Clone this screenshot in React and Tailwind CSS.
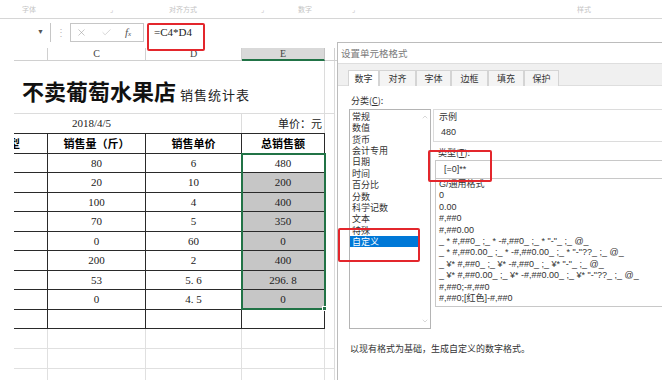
import { X, Check, ChevronUp, ChevronDown } from 'lucide-react';

const rows = [
  { c: '80', d: '6', e: '480', h: 'h-[19px]', active: true },
  { c: '20', d: '10', e: '200', h: 'h-[20px]' },
  { c: '100', d: '4', e: '400', h: 'h-[19px]' },
  { c: '70', d: '5', e: '350', h: 'h-[20px]' },
  { c: '0', d: '60', e: '0', h: 'h-[19px]' },
  { c: '200', d: '2', e: '400', h: 'h-[20px]' },
  { c: '53', d: '5. 6', e: '296. 8', h: 'h-[19px]' },
  { c: '0', d: '4. 5', e: '0', h: 'h-[20px]' },
  { c: '', d: '', e: '', h: 'h-[19px]', empty: true },
];

const categories = ['常规', '数值', '货币', '会计专用', '日期', '时间', '百分比', '分数', '科学记数', '文本', '特殊', '自定义'];

const formats = [
  'G/通用格式',
  '0',
  '0.00',
  '#,##0',
  '#,##0.00',
  '_ * #,##0_ ;_ * -#,##0_ ;_ * "-"_ ;_ @_',
  '_ * #,##0.00_ ;_ * -#,##0.00_ ;_ * "-"??_ ;_ @_',
  '_ ¥* #,##0_ ;_ ¥* -#,##0_ ;_ ¥* "-"_ ;_ @_',
  '_ ¥* #,##0.00_ ;_ ¥* -#,##0.00_ ;_ ¥* "-"??_ ;_ @_',
  '#,##0;-#,##0',
  '#,##0;[红色]-#,##0',
];

const tabs = [
  { label: '数字', w: 'w-[31px]', active: true },
  { label: '对齐', w: 'w-[37px]' },
  { label: '字体', w: 'w-[35px]' },
  { label: '边框', w: 'w-[37px]' },
  { label: '填充', w: 'w-[36px]' },
  { label: '保护', w: 'w-[35px]' },
];

function Ribbon() {
  return (
    <div className="h-[19px] border-b border-[#d6d6d6] flex items-center text-[7px] text-[#c4c4c4] [font-family:'Noto_Sans_CJK_SC',sans-serif]">
      <span className="ml-[22px]">字体</span>
      <span className="ml-[74px]">⌟</span>
      <span className="ml-[56px]">对齐方式</span>
      <span className="ml-[64px]">⌟</span>
      <span className="ml-[34px]">数字</span>
      <span className="ml-[40px]">⌟</span>
      <span className="ml-[222px]">样式</span>
    </div>
  );
}

function FormulaBar() {
  return (
    <div className="h-[29px] flex items-start pt-[4px]">
      <div className="w-[51px] h-[19px] border-r border-[#c6c6c6] flex items-center justify-end pr-[6px]">
        <span className="text-[7px] text-[#555]">▼</span>
      </div>
      <div className="w-[19px] h-[19px] flex items-center justify-center text-[10px] text-[#bbb]">⋮</div>
      <div className="w-[74px] h-[19px] border border-[#c6c6c6] flex items-center">
        <X size={11} strokeWidth={1.2} className="ml-[5px] text-[#9a9a9a]" />
        <Check size={11} strokeWidth={1.2} className="ml-[14px] text-[#b5b5b5]" />
        <span className="ml-[13px] italic text-[11px] text-[#555] [font-family:'Liberation_Serif',serif]">
          f<span className="text-[7px]">x</span>
        </span>
      </div>
      <div className="h-[19px] flex items-center pl-[10px] text-[11px] text-[#222] [font-family:'Liberation_Serif',serif]">=C4*D4</div>
    </div>
  );
}

function ColumnHeader() {
  return (
    <div className="h-[13px] flex text-[10px] text-[#444] [font-family:'Liberation_Serif',serif]">
      <div className="w-[14px]" />
      <div className="w-[34px] border-r border-b border-[#d0d0d0]" />
      <div className="w-[98px] border-r border-b border-[#d0d0d0] flex items-center justify-center leading-none">C</div>
      <div className="w-[96px] border-r border-b border-[#d0d0d0] flex items-center justify-center leading-none">D</div>
      <div className="w-[83px] bg-[#d9d9d9] border-r border-[#c4c4c4] border-b-2 border-b-[#217346] flex items-center justify-center leading-none">E</div>
      <div className="w-[10px] border-r border-b border-[#d0d0d0]" />
      <div className="flex-1 border-b border-[#d0d0d0]" />
    </div>
  );
}

function Sheet() {
  const cell = 'flex items-center justify-center border-r border-b border-[#2a2a2a]';
  return (
    <div className="flex flex-col">
      <div className="h-[53px] flex">
        <div className="w-[14px]" />
        <div className="w-[311px] border-r border-b border-[#dcdcdc] flex items-end pb-[12px] pl-[8px]">
          <span className="text-[22px] leading-none font-bold text-[#111] [font-family:'Noto_Sans_CJK_SC',sans-serif]">不卖葡萄水果店</span>
          <span className="ml-[4px] text-[13px] leading-none tracking-[1px] text-[#222] [font-family:'Noto_Sans_CJK_SC',sans-serif]">销售统计表</span>
        </div>
        <div className="w-[10px] border-r border-b border-[#dcdcdc]" />
      </div>

      <div className="h-[19px] flex text-[11px] text-[#222]">
        <div className="w-[14px]" />
        <div className="w-[228px] border-r border-[#dcdcdc] flex items-center pl-[58px] [font-family:'Liberation_Serif',serif]">2018/4/5</div>
        <div className="w-[83px] border-r border-[#dcdcdc] flex items-center justify-end pr-[2px] [font-family:'Noto_Sans_CJK_SC',sans-serif]">单价：元</div>
        <div className="w-[10px] border-r border-[#dcdcdc]" />
      </div>

      <div className="flex">
        <div className="w-[14px]" />
        <div className="relative">
          <div className="grid grid-cols-[34px_98px_96px_83px] border-t border-[#2a2a2a]">
            <div className={`${cell} h-[20px] overflow-hidden justify-start`}>
              <span className="-ml-[5px] text-[11px] font-bold [font-family:'Noto_Sans_CJK_SC',sans-serif]">型</span>
            </div>
            <div className={`${cell} h-[20px] text-[11px] font-bold [font-family:'Noto_Sans_CJK_SC',sans-serif]`}>销售量（斤）</div>
            <div className={`${cell} h-[20px] text-[11px] font-bold [font-family:'Noto_Sans_CJK_SC',sans-serif]`}>销售单价</div>
            <div className={`${cell} h-[20px] text-[11px] font-bold [font-family:'Noto_Sans_CJK_SC',sans-serif]`}>总销售额</div>
            {rows.map((r, i) => (
              <div key={i} className="contents text-[11px] text-[#222] [font-family:'Liberation_Serif',serif]">
                <div className={`${cell} ${r.h}`} />
                <div className={`${cell} ${r.h}`}>{r.c}</div>
                <div className={`${cell} ${r.h}`}>{r.d}</div>
                <div className={`${cell} ${r.h} ${r.active || r.empty ? 'bg-white' : 'bg-[#c6c6c6]'}`}>{r.e}</div>
              </div>
            ))}
          </div>
          <div className="absolute left-[227px] top-[20px] w-[85px] h-[157px] border-2 border-[#217346]" />
          <div className="absolute left-[308px] top-[173px] w-[5px] h-[5px] bg-[#217346] border border-white" />
        </div>
        <div className="w-[10px] border-r border-[#dcdcdc]" />
      </div>

      {[0, 1, 2].map((i) => (
        <div key={i} className="h-[20px] flex">
          <div className="w-[14px]" />
          <div className="w-[34px] border-r border-b border-[#e0e0e0]" />
          <div className="w-[98px] border-r border-b border-[#e0e0e0]" />
          <div className="w-[96px] border-r border-b border-[#e0e0e0]" />
          <div className="w-[83px] border-r border-b border-[#e0e0e0]" />
          <div className="w-[10px] border-r border-b border-[#e0e0e0]" />
        </div>
      ))}
    </div>
  );
}

function Dialog() {
  return (
    <div className="absolute left-[337px] top-[42px] w-[340px] h-[350px] bg-white border-l border-t border-[#bcbcbc] flex flex-col text-[#333] [font-family:'Noto_Sans_CJK_SC',sans-serif]">
      <div className="h-[20px] pl-[3px] flex items-center text-[9.5px] text-[#7a7a7a]">设置单元格格式</div>
      <div className="h-[23px] bg-[#f0f0f0] border-t border-b border-[#dedede] flex items-end pl-[10px]">
        {tabs.map((t) => (
          <div
            key={t.label}
            className={`${t.w} h-[16px] -mb-px flex items-center justify-center text-[9px] border-t border-l border-r border-[#d4d4d4] ${t.active ? 'bg-white' : 'bg-[#f4f4f4]'}`}
          >
            {t.label}
          </div>
        ))}
      </div>

      <div className="flex flex-col pl-[11px]">
        <div className="mt-[9px] h-[12px] pl-[2px] flex items-center text-[9px]">
          分类(<span className="underline">C</span>):
        </div>
        <div className="mt-[2px] flex items-start">
          <div className="w-[82px] h-[220px] border border-[#b4b4b4] flex">
            <div className="w-[69px] flex flex-col pt-[1px] text-[9px]">
              {categories.map((c) => (
                <div
                  key={c}
                  className={`h-[11.36px] leading-[11.36px] pl-[2px] ${c === '自定义' ? 'bg-[#0078d7] text-white' : ''}`}
                >
                  {c}
                </div>
              ))}
            </div>
            <div className="flex-1 flex flex-col items-center justify-between py-[3px] text-[#b0b0b0]">
              <ChevronUp size={8} strokeWidth={1.5} />
              <ChevronDown size={8} strokeWidth={1.5} />
            </div>
          </div>

          <div className="ml-[2px] w-[240px] flex flex-col">
            <div className="h-[33px] border border-[#dcdcdc] flex flex-col pl-[5px] text-[9px]">
              <div className="mt-[1px] h-[11px] leading-[11px]">示例</div>
              <div className="mt-[5px] h-[11px] leading-[11px] pl-[2px] [font-family:'Liberation_Sans',sans-serif]">480</div>
            </div>
            <div className="mt-[5px] h-[12px] pl-[5px] flex items-center text-[9px]">
              类型(<span className="underline">T</span>):
            </div>
            <div className="mt-[1px] ml-[2px] h-[19px] border border-[#c8c8c8] flex items-center pl-[8px] text-[9px] [font-family:'Liberation_Sans',sans-serif]">
              [=0]**
            </div>
            <div className="ml-[2px] h-[128px] border border-t-0 border-[#c8c8c8] flex flex-col pl-[3px] text-[9px] [font-family:'Liberation_Sans','Noto_Sans_CJK_SC',sans-serif]">
              {formats.map((f) => (
                <div key={f} className="h-[11.4px] leading-[11.4px] whitespace-pre">{f}</div>
              ))}
            </div>
          </div>
        </div>
        <div className="mt-[14px] h-[12px] pl-[1px] flex items-center text-[9px]">以现有格式为基础，生成自定义的数字格式。</div>
      </div>
    </div>
  );
}

export default function App() {
  return (
    <div className="relative w-[662px] h-[380px] overflow-hidden bg-white">
      <Ribbon />
      <FormulaBar />
      <ColumnHeader />
      <Sheet />
      <div className="absolute left-[334px] top-[61px] w-px h-[319px] bg-[#dcdcdc]" />
      <Dialog />
      <div className="absolute left-[147px] top-[23px] w-[58px] h-[28px] border-2 border-[#e3262c] rounded-[2px]" />
      <div className="absolute left-[428px] top-[150px] w-[64px] h-[32px] border-2 border-[#e3262c] rounded-[2px]" />
      <div className="absolute left-[338px] top-[228px] w-[82px] h-[34px] border-2 border-[#e3262c] rounded-[2px]" />
    </div>
  );
}
